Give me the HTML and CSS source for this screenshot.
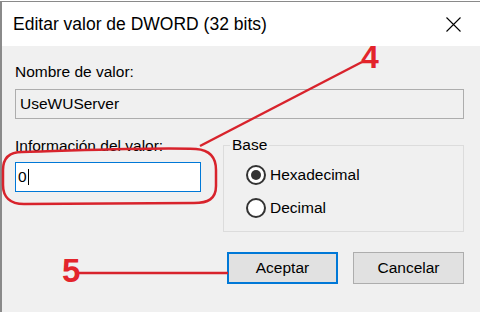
FILE: index.html
```html
<!DOCTYPE html>
<html lang="es">
<head>
<meta charset="utf-8">
<title>Editar valor de DWORD (32 bits)</title>
<link rel="stylesheet" href="styles.css">
</head>
<body>
<div class="screen">
  <div class="dialog">
    <div class="titlebar">
      <span class="title">Editar valor de DWORD (32 bits)</span>
      <svg class="close" width="15" height="15" viewBox="0 0 15 15" aria-hidden="true">
        <path d="M0.5 0.5 L14.5 14.5 M14.5 0.5 L0.5 14.5" stroke="#000" stroke-width="1.1" fill="none"/>
      </svg>
    </div>
    <div class="content">
      <div class="label">Nombre de valor:</div>
      <div class="field readonly">UseWUServer</div>
      <div class="row">
        <div class="col">
          <div class="label label-info">Información del valor:</div>
          <div class="field edit">0<span class="caret"></span></div>
        </div>
        <fieldset class="group">
          <legend class="legend">Base</legend>
          <div class="radio"><span class="circle checked"></span><span class="rtext">Hexadecimal</span></div>
          <div class="radio"><span class="circle"></span><span class="rtext">Decimal</span></div>
        </fieldset>
      </div>
      <div class="buttons">
        <div class="btn btn-default">Aceptar</div>
        <div class="btn">Cancelar</div>
      </div>
    </div>
  </div>
  <svg class="annot" width="480" height="312" viewBox="0 0 480 312" aria-hidden="true">
    <path d="M22 152 C70 151 150 147 196 149 C210 150 216 158 216 170 L216 186 C216 199 208 203 194 203 L24 204 C10 204 3 197 3 185 L3 170 C3 157 10 152 22 152 Z" fill="none" stroke="#d8232c" stroke-width="2.5"/>
    <path d="M200 146 L362 62" stroke="#d8232c" stroke-width="2.5" fill="none"/>
    <path d="M78 273 L228 273" stroke="#d8232c" stroke-width="2.5" fill="none"/>
  </svg>
  <span class="num num4">4</span>
  <span class="num num5">5</span>
</div>
</body>
</html>
```
FILE: styles.css
```css
html, body {
  margin: 0;
  padding: 0;
  background: #ffffff;
}

.screen {
  position: relative;
  width: 480px;
  height: 312px;
  padding-top: 1px;
  box-sizing: border-box;
  overflow: hidden;
  font-family: "Liberation Sans", Arial, sans-serif;
  color: #000;
}

.dialog {
  height: 311px;
  border-top: 1px solid #8a8a8a;
  border-left: 2px solid #8a8a8a;
  box-sizing: border-box;
  display: flex;
  flex-direction: column;
}

.titlebar {
  height: 44px;
  flex: none;
  background: #ffffff;
  display: flex;
  align-items: center;
  justify-content: space-between;
  padding-left: 11px;
  padding-right: 19px;
}

.title {
  font-size: 17.5px;
  line-height: 20px;
  margin-bottom: 1px;
}

.close {
  display: block;
  margin-top: 1px;
}

.content {
  flex: 1;
  background: #f0f0f0;
  padding: 17px 16px 0 13px;
  font-size: 15.5px;
  line-height: 18px;
}

.label {
  height: 18px;
}

.field {
  box-sizing: border-box;
  height: 30px;
  line-height: 28px;
  margin-top: 8px;
  padding-left: 4px;
  display: flex;
  align-items: center;
}

.readonly {
  background: #f0f0f0;
  border: 1px solid #adadad;
}

.row {
  display: flex;
  align-items: flex-start;
  margin-top: 17px;
}

.col {
  width: 186px;
  flex: none;
}

.label-info {
  margin-top: 1px;
}

.edit {
  margin-top: 7px;
  background: #ffffff;
  border: 1px solid #0078d7;
  padding-left: 2px;
}

.caret {
  display: inline-block;
  width: 1px;
  height: 16px;
  background: #000;
  margin-left: 1px;
}

.group {
  box-sizing: border-box;
  width: 242px;
  margin: 0 0 0 22px;
  padding: 4px 0 7px 0;
  border: 1px solid #dcdcdc;
  min-width: 0;
}

.legend {
  margin-left: 6px;
  padding: 0 2px;
  line-height: 18px;
  height: 18px;
}

.radio {
  height: 33px;
  display: flex;
  align-items: center;
  margin-left: 22px;
}

.circle {
  box-sizing: border-box;
  width: 20px;
  height: 20px;
  border: 2px solid #333333;
  border-radius: 50%;
  background: #ffffff;
  display: flex;
  align-items: center;
  justify-content: center;
  flex: none;
}

.circle.checked::after {
  content: "";
  width: 10px;
  height: 10px;
  border-radius: 50%;
  background: #333333;
}

.rtext {
  margin-left: 4px;
}

.buttons {
  display: flex;
  justify-content: flex-end;
  gap: 15px;
  margin-top: 20px;
}

.btn {
  box-sizing: border-box;
  width: 111px;
  height: 32px;
  background: #e1e1e1;
  border: 1px solid #adadad;
  display: flex;
  align-items: center;
  justify-content: center;
}

.btn-default {
  border: 2px solid #0078d7;
}

.annot {
  position: absolute;
  left: 0;
  top: 0;
  pointer-events: none;
}

.num {
  position: absolute;
  font-family: "Liberation Sans", Arial, sans-serif;
  font-weight: bold;
  color: #e3242b;
}

.num4 {
  left: 361px;
  top: 41px;
  font-size: 32px;
  line-height: 32px;
}

.num5 {
  left: 62px;
  top: 254px;
  font-size: 33px;
  line-height: 33px;
}
```
